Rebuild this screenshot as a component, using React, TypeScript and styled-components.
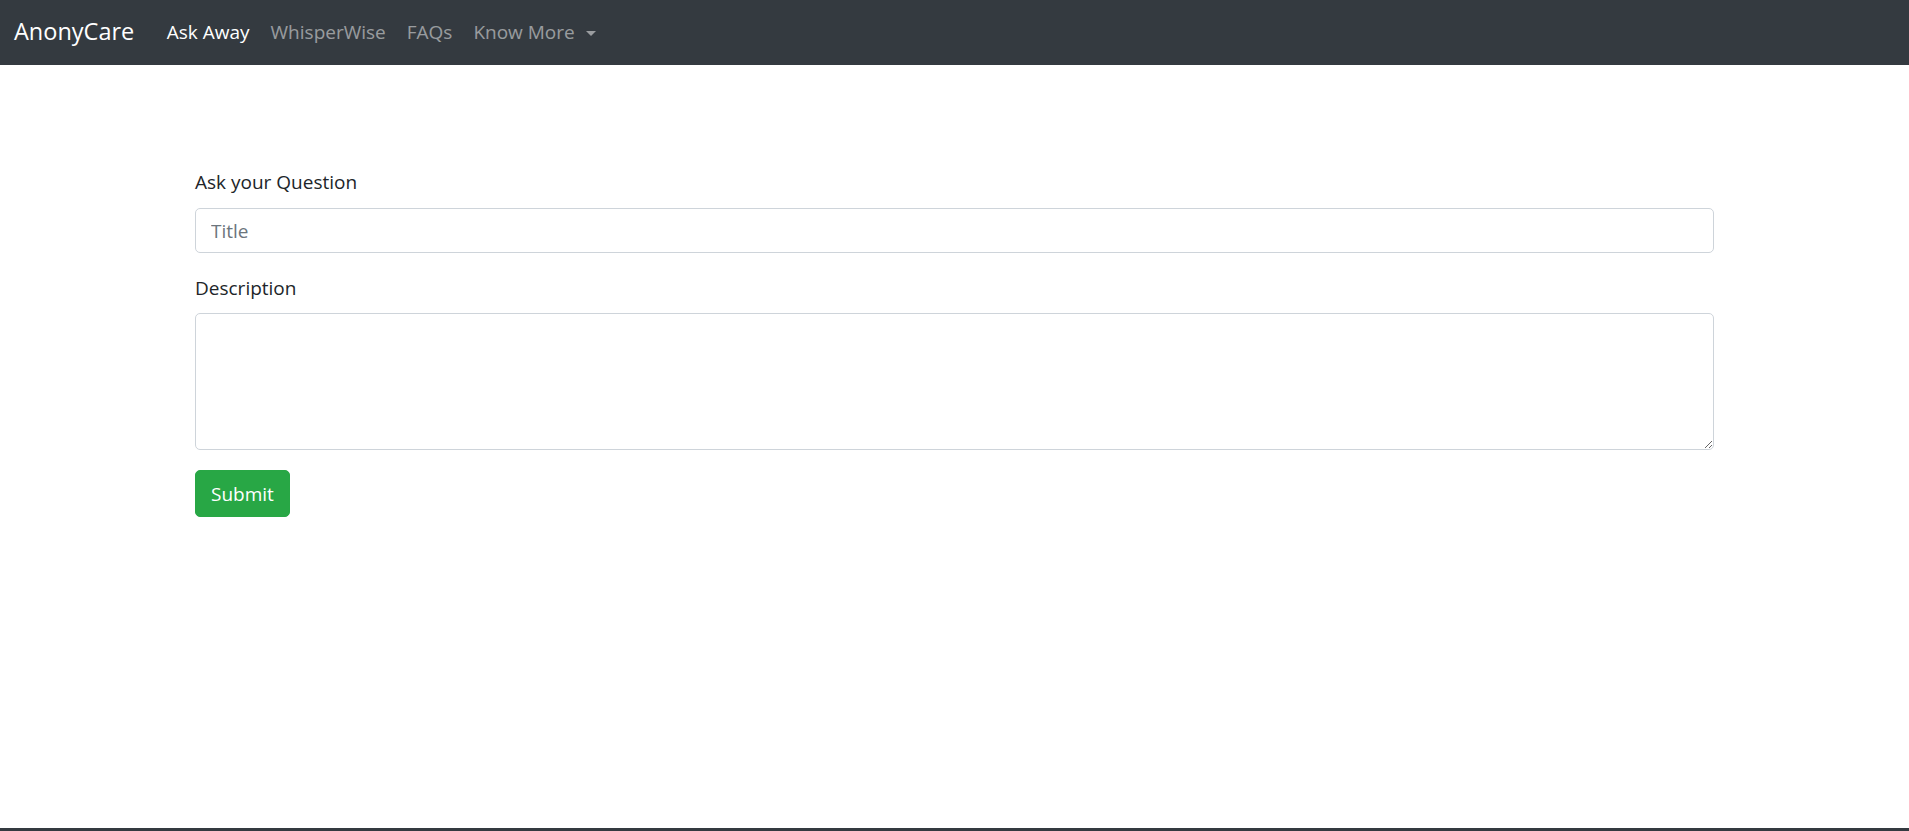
import React from 'react';
import styled, { createGlobalStyle } from 'styled-components';

const colors = {
  dark: '#343a40',
  text: '#212529',
  muted: '#6c757d',
  border: '#ced4da',
  success: '#28a745',
  linkMuted: 'rgba(255, 255, 255, 0.5)',
};

const GlobalStyle = createGlobalStyle`
  html, body {
    margin: 0;
    padding: 0;
    background: #fff;
  }
  body {
    font-family: 'Open Sans', 'Noto Sans', 'Liberation Sans', sans-serif;
    font-size: 19px;
    line-height: 1.5;
    color: ${colors.text};
  }
  * {
    box-sizing: border-box;
  }
`;

const Page = styled.div`
  display: flex;
  flex-direction: column;
`;

const Navbar = styled.nav`
  display: flex;
  align-items: center;
  height: 65px;
  padding: 0 14px;
  background: ${colors.dark};
`;

const Brand = styled.a`
  font-size: 23.5px;
  line-height: 1;
  color: #fff;
  text-decoration: none;
  margin-right: 22px;
  padding-bottom: 2px;
`;

const NavList = styled.ul`
  display: flex;
  align-items: center;
  list-style: none;
  margin: 0;
  padding: 0;
`;

const NavLink = styled.a<{ $active?: boolean }>`
  display: flex;
  align-items: center;
  padding: 0 10.5px;
  font-size: 19px;
  line-height: 1;
  color: ${({ $active }) => ($active ? '#fff' : colors.linkMuted)};
  text-decoration: none;
  cursor: pointer;
`;

const Caret = styled.span`
  display: inline-block;
  margin-left: 11px;
  margin-top: 1px;
  border-top: 5.5px solid currentColor;
  border-left: 5.5px solid transparent;
  border-right: 5.5px solid transparent;
`;

const Main = styled.main`
  min-height: calc(100vh - 68px);
  padding-top: 103px;
`;

const Container = styled.div`
  max-width: 1519px;
  margin: 0 auto;
`;

const Form = styled.form`
  display: flex;
  flex-direction: column;
  align-items: flex-start;
`;

const Field = styled.div<{ $gap: number }>`
  width: 100%;
  margin-bottom: ${({ $gap }) => $gap}px;
`;

const Label = styled.label<{ $space: number }>`
  display: block;
  height: 28px;
  line-height: 28px;
  margin-bottom: ${({ $space }) => $space}px;
  color: ${colors.text};
`;

const Input = styled.input`
  display: block;
  width: 100%;
  height: 45px;
  padding: 0 15px;
  font-family: inherit;
  font-size: 19px;
  color: #495057;
  background: #fff;
  border: 1px solid ${colors.border};
  border-radius: 5px;
  outline: none;

  &::placeholder {
    color: ${colors.muted};
  }
`;

const TextArea = styled.textarea`
  display: block;
  width: 100%;
  height: 137px;
  padding: 7px 15px;
  font-family: inherit;
  font-size: 19px;
  line-height: 1.5;
  color: #495057;
  background: #fff;
  border: 1px solid ${colors.border};
  border-radius: 5px;
  outline: none;
  resize: vertical;
`;

const SubmitButton = styled.button`
  height: 47px;
  padding: 0 15px;
  font-family: inherit;
  font-size: 19px;
  color: #fff;
  background: ${colors.success};
  border: 1px solid ${colors.success};
  border-radius: 5px;
  cursor: pointer;
`;

const Footer = styled.footer`
  height: 56px;
  background: ${colors.dark};
`;

const App: React.FC = () => {
  return (
    <Page>
      <GlobalStyle />
      <Navbar>
        <Brand href="#">AnonyCare</Brand>
        <NavList>
          <li>
            <NavLink $active>Ask Away</NavLink>
          </li>
          <li>
            <NavLink>WhisperWise</NavLink>
          </li>
          <li>
            <NavLink>FAQs</NavLink>
          </li>
          <li>
            <NavLink>
              Know More
              <Caret />
            </NavLink>
          </li>
        </NavList>
      </Navbar>
      <Main>
        <Container>
          <Form onSubmit={(e) => e.preventDefault()}>
            <Field $gap={21}>
              <Label htmlFor="title" $space={12}>
                Ask your Question
              </Label>
              <Input id="title" type="text" placeholder="Title" />
            </Field>
            <Field $gap={20}>
              <Label htmlFor="description" $space={11}>
                Description
              </Label>
              <TextArea id="description" />
            </Field>
            <SubmitButton type="submit">Submit</SubmitButton>
          </Form>
        </Container>
      </Main>
      <Footer />
    </Page>
  );
};

export default App;
